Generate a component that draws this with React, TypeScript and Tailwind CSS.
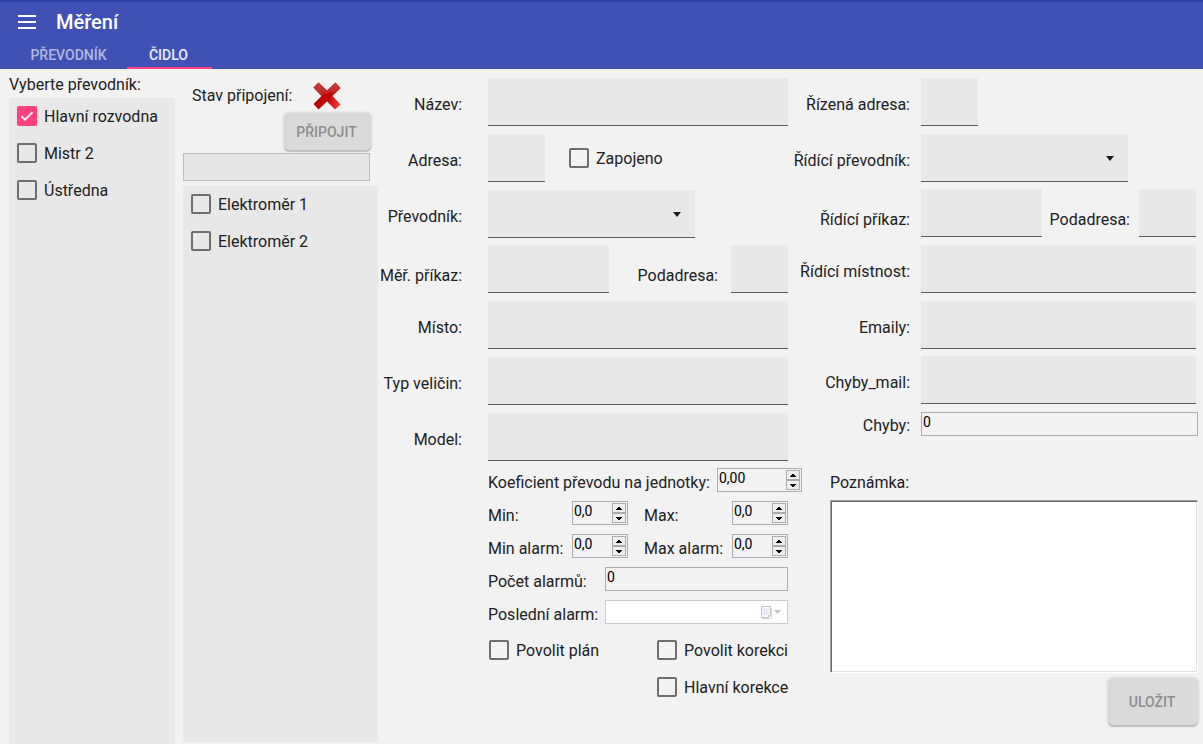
import { useState, type ReactNode } from "react";

const LABEL = "shrink-0 whitespace-nowrap text-base leading-5";
const SMALL_ROW_LABEL = "h-6 shrink-0 whitespace-nowrap pt-1 text-base leading-[22px]";

function Box({
  id,
  text,
  on = false,
  className = "",
}: {
  id: string;
  text: string;
  on?: boolean;
  className?: string;
}) {
  const [checked, setChecked] = useState(on);
  return (
    <label htmlFor={id} className={`flex h-5 items-center gap-[7px] whitespace-nowrap text-base leading-5 ${className}`}>
      <span className="relative flex size-5 shrink-0">
        <input
          id={id}
          type="checkbox"
          checked={checked}
          onChange={() => setChecked(!checked)}
          className="size-5 appearance-none rounded-xs border-2 border-[#6e6e6e] checked:border-[#ff4081] checked:bg-[#ff4081]"
        />
        {checked && (
          <svg viewBox="0 0 20 20" className="pointer-events-none absolute inset-0 size-5">
            <path d="M4.5 10.2 8 13.700l7.500-7.500" fill="none" stroke="#f2f2f2" strokeWidth="2" />
          </svg>
        )}
      </span>
      <span className="pt-0.5">{text}</span>
    </label>
  );
}

function Filled({ id, className }: { id: string; className: string }) {
  return <input id={id} type="text" className={`h-12 border-b border-[#5c5c5c] bg-[#e8e8e8] px-2 outline-none ${className}`} />;
}

function Choice({ id }: { id: string }) {
  return (
    <span className="relative flex w-[207px]">
      <select id={id} className="h-12 w-full appearance-none border-b border-[#5c5c5c] bg-[#e8e8e8] px-2 outline-none">
        <option value=""></option>
      </select>
      <svg viewBox="0 0 8 5" className="pointer-events-none absolute top-[22px] right-3.5 h-[5px] w-2">
        <path d="M0 0h8L4 5z" fill="#1c1c1c" />
      </svg>
    </span>
  );
}

function LeftRow({ id, text, low = false, children }: { id: string; text: string; low?: boolean; children: ReactNode }) {
  return (
    <div className="flex items-center">
      <label htmlFor={id} className={`${LABEL} mr-[26px] w-[84px] text-right ${low ? "pt-3.5" : "pt-1.5"}`}>
        {text}
      </label>
      {children}
    </div>
  );
}

function RightRow({ id, text, low = false, children }: { id: string; text: string; low?: boolean; children: ReactNode }) {
  return (
    <div className="flex items-center pr-0.5">
      <label htmlFor={id} className={`${LABEL} mr-[11px] w-[122px] text-right ${low ? "pt-3.5" : "pt-1.5"}`}>
        {text}
      </label>
      {children}
    </div>
  );
}

function Spin({ id, start, digits, className }: { id: string; start: number; digits: number; className: string }) {
  const [value, setValue] = useState(start);
  return (
    <span className={`flex h-6 border border-[#abadb3] p-px ${className}`}>
      <input
        id={id}
        type="text"
        value={value.toFixed(digits).replace(".", ",")}
        readOnly
        className="h-4 w-0 min-w-0 flex-1 bg-transparent text-sm leading-4 text-black outline-none"
      />
      <span className="flex w-3.5 flex-col">
        <button
          type="button"
          aria-label="+"
          onClick={() => setValue(value + 1)}
          className="flex h-2.5 items-center justify-center border border-[#acacac] bg-[#efefef]"
        >
          <svg viewBox="0 0 6 3" className="h-[3px] w-1.5" shapeRendering="crispEdges">
            <path d="M2 0h2v1h1v1h1v1H0V2h1V1h1z" fill="#000" />
          </svg>
        </button>
        <button
          type="button"
          aria-label="-"
          onClick={() => setValue(value - 1)}
          className="flex h-2.5 items-center justify-center border border-[#acacac] bg-[#efefef]"
        >
          <svg viewBox="0 0 6 3" className="h-[3px] w-1.5" shapeRendering="crispEdges">
            <path d="M0 0h6v1H5v1H4v1H2V2H1V1H0z" fill="#000" />
          </svg>
        </button>
      </span>
    </span>
  );
}

const RAISED =
  "rounded-[5px] bg-[#dadada] pr-0.5 text-sm font-medium text-[#8d8d8d] shadow-[0_2px_1px_#bdbdbd,0_0_3px_#c4c4c4]";

export default function App() {
  return (
    <div className="flex min-h-screen flex-col bg-[#f2f2f2] font-['Roboto',sans-serif] text-[#212121]">
      <header className="border-t-2 border-[#303f9f] bg-[#3f51b5] text-white">
        <div className="flex h-10 items-center gap-5 pl-[18px]">
          <button type="button" aria-label="Menu" className="flex h-3.5 w-[18px] flex-col justify-between">
            <span className="h-0.5 w-full bg-white" />
            <span className="h-0.5 w-full bg-white" />
            <span className="h-0.5 w-full bg-white" />
          </button>
          <h1 className="text-xl font-medium">Měření</h1>
        </div>
        <nav className="flex h-[27px] pl-3 text-sm font-medium">
          <button type="button" className="w-[115px] border-b-2 border-transparent pr-0.5 text-white/60">
            PŘEVODNÍK
          </button>
          <button type="button" className="w-[85px] border-b-2 border-[#ff4081] pr-0.5 text-white/90">
            ČIDLO
          </button>
        </nav>
      </header>

      <main className="flex flex-1 pl-[9px]">
        <section className="flex w-[166px] shrink-0 flex-col pt-1.5">
          <h2 className={LABEL}>Vyberte převodník:</h2>
          <div className="mt-[3px] flex flex-1 flex-col gap-[17px] bg-[#e8e8e8] pt-2 pl-2">
            <Box id="p1" text="Hlavní rozvodna" on />
            <Box id="p2" text="Mistr 2" />
            <Box id="p3" text="Ústředna" />
          </div>
        </section>

        <section className="ml-2 flex w-[195px] shrink-0 flex-col pb-0.5">
          <div className="flex h-11 items-center gap-[21px] pt-2.5 pl-[9px]">
            <span className={LABEL}>Stav připojení:</span>
            <svg viewBox="0 0 28 28" className="size-7">
              <defs>
                <linearGradient id="red" x1="0" y1="0.7" x2="1" y2="1">
                  <stop offset="0" stopColor="#b80000" />
                  <stop offset="0.5" stopColor="#c40808" />
                  <stop offset="1" stopColor="#ff4848" />
                </linearGradient>
                <linearGradient id="gloss" x1="0" y1="0" x2="0" y2="1">
                  <stop offset="0" stopColor="#c84040" />
                  <stop offset="1" stopColor="#c01c1c" />
                </linearGradient>
              </defs>
              <path d="M5.500 0.500 14 8.500l8.500-8L27.500 6 19.500 14l8 8.500-5.500 5-8-8-8.500 8-5-5.500L8.500 14 0.500 5.500z" fill="url(#red)" />
              <path d="M5.500 0.500 14 8.500l8.500-8L27.500 6 23 10.500Q14 9.500 8.500 14L0.500 5.500z" fill="url(#gloss)" />
            </svg>
          </div>
          <button type="button" className={`mr-[7px] h-[37px] w-[87px] self-end ${RAISED}`}>
            PŘIPOJIT
          </button>
          <input
            type="text"
            aria-label="Stav připojení"
            className="mt-[3px] mr-2 h-7 border border-[#bcbcbc] bg-[#e6e6e6] px-1 outline-none"
          />
          <div className="mt-[5px] flex flex-1 flex-col gap-[17px] bg-[#e8e8e8] pt-2 pl-2">
            <Box id="e1" text="Elektroměr 1" />
            <Box id="e2" text="Elektroměr 2" />
          </div>
        </section>

        <section className="flex w-[410px] shrink-0 flex-col gap-[7px] pt-[9px]">
          <div className="flex flex-col gap-2">
            <LeftRow id="nazev" text="Název:">
              <Filled id="nazev" className="w-[300px]" />
            </LeftRow>
            <LeftRow id="adresa" text="Adresa:">
              <Filled id="adresa" className="w-[57px]" />
              <Box id="zapojeno" text="Zapojeno" className="ml-6" />
            </LeftRow>
            <LeftRow id="prevodnik" text="Převodník:">
              <Choice id="prevodnik" />
            </LeftRow>
          </div>
          <div className="flex flex-col gap-2">
            <LeftRow id="prikaz" text="Měř. příkaz:" low>
              <Filled id="prikaz" className="w-[121px]" />
              <label htmlFor="podadresa" className={`${LABEL} ml-auto pt-3.5 pr-[13px]`}>
                Podadresa:
              </label>
              <Filled id="podadresa" className="w-[57px]" />
            </LeftRow>
            <LeftRow id="misto" text="Místo:">
              <Filled id="misto" className="w-[300px]" />
            </LeftRow>
            <LeftRow id="typ" text="Typ veličin:">
              <Filled id="typ" className="w-[300px]" />
            </LeftRow>
            <LeftRow id="model" text="Model:">
              <Filled id="model" className="w-[300px]" />
            </LeftRow>
          </div>

          <div className="ml-[110px] flex flex-col gap-[9px]">
            <div className="-mr-3.5 flex items-center justify-between">
              <label htmlFor="koef" className={SMALL_ROW_LABEL}>
                Koeficient převodu na jednotky:
              </label>
              <Spin id="koef" start={0} digits={2} className="w-[85px]" />
            </div>
            <div className="flex items-center">
              <label htmlFor="min" className={`${SMALL_ROW_LABEL} w-[84px]`}>
                Min:
              </label>
              <Spin id="min" start={0} digits={1} className="w-14" />
              <label htmlFor="max" className={`${SMALL_ROW_LABEL} ml-4`}>
                Max:
              </label>
              <Spin id="max" start={0} digits={1} className="ml-auto w-14" />
            </div>
            <div className="flex items-center">
              <label htmlFor="mina" className={`${SMALL_ROW_LABEL} w-[84px]`}>
                Min alarm:
              </label>
              <Spin id="mina" start={0} digits={1} className="w-14" />
              <label htmlFor="maxa" className={`${SMALL_ROW_LABEL} ml-4`}>
                Max alarm:
              </label>
              <Spin id="maxa" start={0} digits={1} className="ml-auto w-14" />
            </div>
            <div className="flex items-center">
              <label htmlFor="pocet" className={`${SMALL_ROW_LABEL} w-[117px]`}>
                Počet alarmů:
              </label>
              <input
                id="pocet"
                type="text"
                defaultValue="0"
                className="h-6 w-0 flex-1 border border-[#abadb3] pb-1 pl-px text-sm leading-4 text-black outline-none"
              />
            </div>
            <div className="flex items-center">
              <label htmlFor="posledni" className={`${SMALL_ROW_LABEL} w-[117px]`}>
                Poslední alarm:
              </label>
              <span className="flex h-6 flex-1 items-center border border-[#cccccc] bg-white pr-1.5">
                <input id="posledni" type="text" className="w-0 flex-1 outline-none" />
                <svg viewBox="0 0 21 13" className="h-[13px] w-[21px]">
                  <path d="M1.500 0.500h9v9l-2 2h-7z" fill="#f6f7fa" stroke="#c4c4c8" />
                  <path d="M3 3.500h6M3 5.500h6M3 7.500h6M4.500 2v7M6.500 2v7" stroke="#e0e5ee" />
                  <path d="M11.500 2v10.500h-9" fill="none" stroke="#dcd8d4" />
                  <path d="M11 9l-3 3V9z" fill="#d0cdca" />
                  <path d="M14 4h7l-3.500 4z" fill="#c4c4bc" />
                </svg>
              </span>
            </div>
          </div>

          <div className="mt-[9px] ml-[111px] grid grid-cols-[168px_auto] gap-y-[17px]">
            <Box id="plan" text="Povolit plán" />
            <Box id="korekce" text="Povolit korekci" />
            <Box id="hlavni" text="Hlavní korekce" className="col-start-2" />
          </div>
        </section>

        <section className="flex min-w-0 flex-1 flex-col pt-[9px] pr-[5px]">
          <div className="flex flex-col gap-[7px]">
            <div className="flex flex-col gap-2">
              <RightRow id="radresa" text="Řízená adresa:">
                <Filled id="radresa" className="w-[57px]" />
              </RightRow>
              <RightRow id="rprevodnik" text="Řídící převodník:">
                <Choice id="rprevodnik" />
              </RightRow>
            </div>
            <div className="flex flex-col gap-2">
              <RightRow id="rprikaz" text="Řídící příkaz:" low>
                <Filled id="rprikaz" className="w-[121px]" />
                <label htmlFor="rpodadresa" className={`${LABEL} ml-auto pt-3.5 pr-[9px]`}>
                  Podadresa:
                </label>
                <Filled id="rpodadresa" className="w-[57px]" />
              </RightRow>
              <RightRow id="mistnost" text="Řídící místnost:">
                <Filled id="mistnost" className="w-0 flex-1" />
              </RightRow>
              <RightRow id="emaily" text="Emaily:">
                <Filled id="emaily" className="w-0 flex-1" />
              </RightRow>
            </div>
            <div className="flex flex-col gap-2">
              <RightRow id="chybymail" text="Chyby_mail:">
                <Filled id="chybymail" className="w-0 flex-1" />
              </RightRow>
              <div className="flex items-center">
                <label htmlFor="chyby" className={`${LABEL} mr-[11px] w-[122px] pt-1 text-right`}>
                  Chyby:
                </label>
                <input
                  id="chyby"
                  type="text"
                  defaultValue="0"
                  className="h-6 w-0 flex-1 border border-[#abadb3] pb-1 pl-px text-sm leading-4 text-black outline-none"
                />
              </div>
            </div>
          </div>
          <div className="mt-[37px] ml-[42px] flex flex-col">
            <label htmlFor="poznamka" className={LABEL}>
              Poznámka:
            </label>
            <textarea
              id="poznamka"
              className="mt-[7px] h-[173px] resize-none border border-t-[#a0a0a0] border-r-white border-b-white border-l-[#a0a0a0] bg-white p-1 shadow-[inset_1px_1px_#696969,inset_-1px_-1px_#e3e3e3] outline-none"
            />
            <button type="button" className={`mt-[5px] h-[47px] w-[90px] self-end ${RAISED}`}>
              ULOŽIT
            </button>
          </div>
        </section>
      </main>
    </div>
  );
}
